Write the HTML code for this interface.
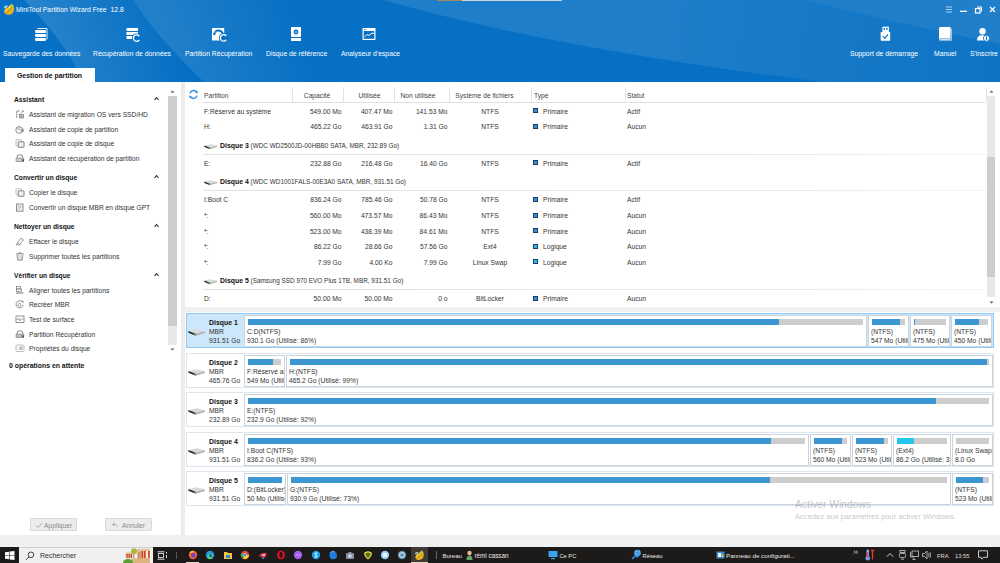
<!DOCTYPE html>
<html><head><meta charset="utf-8">
<style>
*{margin:0;padding:0;box-sizing:border-box}
html,body{width:1000px;height:563px;overflow:hidden;background:#f0f0f0;font-family:"Liberation Sans",sans-serif;font-size:6.7px;color:#222}
.a{position:absolute;white-space:nowrap}
.t{position:absolute;white-space:nowrap;line-height:10px;height:10px}
#hdr{position:absolute;left:0;top:0;width:1000px;height:83px;background:#0670c4;overflow:hidden}
.tl{color:#fff;font-size:6.8px}
.lbl{color:#fff;font-size:6.8px}
#left{position:absolute;left:0;top:82px;width:181px;height:453px;background:#fff}
#sep{position:absolute;left:181px;top:82px;width:4px;height:453px;background:#ececec}
#main{position:absolute;left:185px;top:82px;width:815px;height:453px;background:#fff}
.sh{font-weight:bold;color:#111}
.it{color:#333}
.hd{color:#444}
.v{color:#333}
.card{position:absolute;left:186px;width:808px;height:34px;border:1px solid #dfe5ec;background:#fff}
.card.sel{background:#cce6fa;border-color:#90caf9}
.pb{position:absolute;top:1px;height:31px;border:1px solid #cad4e0;background:#fff;overflow:hidden}
.bar{position:absolute;left:3px;top:3px;height:6px;background:#cdcdcd}
.bar i{position:absolute;left:0;top:0;height:6px;background:#3c96d2}
.pt{position:absolute;left:2px;white-space:nowrap;line-height:9px;color:#333}
.dl{position:absolute;left:22px;white-space:nowrap;line-height:9px;color:#333}
</style></head><body>

<div id="hdr">
<svg width="1000" height="83" style="position:absolute;left:0;top:0">
<defs>
<linearGradient id="g1" gradientUnits="userSpaceOnUse" x1="50" y1="45" x2="160" y2="5"><stop offset="0" stop-color="#fff" stop-opacity="0.13"/><stop offset="1" stop-color="#fff" stop-opacity="0"/></linearGradient>
<linearGradient id="g2" gradientUnits="userSpaceOnUse" x1="168" y1="45" x2="300" y2="5"><stop offset="0" stop-color="#fff" stop-opacity="0.11"/><stop offset="1" stop-color="#fff" stop-opacity="0"/></linearGradient>
<linearGradient id="g3" gradientUnits="userSpaceOnUse" x1="650" y1="15" x2="1000" y2="80"><stop offset="0" stop-color="#fff" stop-opacity="0.10"/><stop offset="1" stop-color="#fff" stop-opacity="0.03"/></linearGradient>
<linearGradient id="g4" gradientUnits="userSpaceOnUse" x1="0" y1="82" x2="0" y2="0"><stop offset="0" stop-color="#fff" stop-opacity="0.05"/><stop offset="1" stop-color="#fff" stop-opacity="0"/></linearGradient>
</defs>
<path d="M24,0 L134,0 Q150,30 205,83 L85,83 Q60,35 24,0 Z" fill="url(#g1)"/>
<path d="M134,0 L383,0 L383,83 L205,83 Q150,30 134,0 Z" fill="url(#g2)"/>
<path d="M383,0 L806,0 Q900,24 1000,44 L1000,83 L831,83 Q560,50 383,0 Z" fill="url(#g3)"/>
<path d="M806,0 L1000,0 L1000,44 Q900,24 806,0Z" fill="#fff" fill-opacity="0.11"/>
</svg>

<!-- logo -->
<svg class="a" style="left:2px;top:2px" width="13" height="14" viewBox="0 0 13 14">
<defs><linearGradient id="lg" x1="0" y1="0" x2="1" y2="1"><stop offset="0" stop-color="#f8e030"/><stop offset="1" stop-color="#e89a10"/></linearGradient></defs>
<ellipse cx="3.8" cy="4.8" rx="2.2" ry="1.1" transform="rotate(-25 3.8 4.8)" fill="#9fd0f0"/>
<path d="M2.2,9.5 Q2.5,6.2 6,5.2 L9.5,1.8 Q12.6,3.5 12,8 Q11.5,12.5 6.5,12.8 Q2.8,12.8 2.2,9.5Z" fill="url(#lg)"/>
<path d="M9,3.5 L11,5.5 L9.5,7.5Z" fill="#6cc04a" opacity="0.8"/>
<path d="M6.5,4.5 L8,3.8 L8,6Z" fill="#e8f0a0"/>
<path d="M2,13.5 L9,6.5" stroke="#555" stroke-width="0.6"/>
</svg>
<div class="t tl" style="left:16px;top:5px">MiniTool Partition Wizard Free&nbsp; 12.8</div>
<!-- window controls -->
<svg class="a" style="left:944px;top:4px" width="56" height="12" viewBox="0 0 56 12">
<path d="M2,3h6M2,5.5h6M2,8h6" stroke="#cfe3f5" stroke-width="0.8"/>
<path d="M16,7.3h7" stroke="#fff" stroke-width="1.3"/>
<rect x="31.5" y="4.5" width="4.5" height="4.5" fill="none" stroke="#fff" stroke-width="1.2"/>
<path d="M33,3h4.5v4.5" fill="none" stroke="#fff" stroke-width="1"/>
<path d="M46,3l5,5M51,3l-5,5" stroke="#fff" stroke-width="1.2"/>
</svg>
<!-- toolbar icons -->
<svg class="a" style="left:33px;top:27px" width="16" height="16" viewBox="0 0 16 16">
<path d="M4.5,1.5h9.5v11" fill="none" stroke="#fff" stroke-width="0.9"/>
<rect x="2" y="3" width="11" height="3" rx="1.3" fill="#fff"/>
<rect x="2" y="7" width="11" height="3" rx="1.3" fill="#fff"/>
<rect x="2" y="11" width="11" height="3" rx="1.3" fill="#fff"/>
</svg>
<svg class="a" style="left:124px;top:26px" width="18" height="18" viewBox="0 0 18 18">
<rect x="2.5" y="2" width="11.5" height="3" rx="0.5" fill="#fff"/>
<rect x="2.5" y="6" width="11.5" height="3" rx="0.5" fill="#fff"/>
<rect x="2.5" y="10" width="11.5" height="3" rx="0.5" fill="#fff"/>
<circle cx="12.5" cy="12" r="4.6" fill="#0670c4"/>
<path d="M14.9,9.9 A3.2,3.2 0 1 0 15.3,13.8" fill="none" stroke="#fff" stroke-width="1.3"/>
<path d="M13.2,8.6 L15.6,8.9 L15,11Z" fill="#fff"/>
</svg>
<svg class="a" style="left:210px;top:26px" width="18" height="18" viewBox="0 0 18 18">
<rect x="2" y="2" width="12.2" height="12.5" rx="0.6" fill="#fff"/>
<path d="M4,9 Q5,4.5 8.5,4.5 Q12,4.5 13,8.5" fill="none" stroke="#0670c4" stroke-width="2.2"/>
<path d="M4.8,6.8 Q5.5,5.3 6.8,5.8" fill="none" stroke="#fff" stroke-width="0.6"/>
<circle cx="13.5" cy="11.8" r="4.6" fill="#0670c4"/>
<path d="M15.9,9.7 A3.2,3.2 0 1 0 16.3,13.6" fill="none" stroke="#fff" stroke-width="1.3"/>
<path d="M14.2,8.4 L16.6,8.7 L16,10.8Z" fill="#fff"/>
</svg>
<svg class="a" style="left:289px;top:26px" width="14" height="17" viewBox="0 0 14 17">
<rect x="2" y="1" width="10" height="10" rx="0.8" fill="#fff"/>
<circle cx="7" cy="6" r="2.4" fill="#0670c4"/><circle cx="7" cy="6" r="0.8" fill="#fff"/>
<rect x="2" y="12" width="10" height="3" rx="0.5" fill="#fff"/>
</svg>
<svg class="a" style="left:361px;top:27px" width="16" height="15" viewBox="0 0 16 15">
<rect x="1.5" y="1" width="13" height="12" rx="0.5" fill="#fff"/>
<rect x="2.7" y="4" width="10.6" height="7.8" fill="#0670c4"/>
<circle cx="3.5" cy="2.4" r="0.5" fill="#0670c4"/><circle cx="5" cy="2.4" r="0.5" fill="#0670c4"/>
<path d="M3.5,10 L6,7.5 L8,8.5 L11,6 L13,6.5" fill="none" stroke="#fff" stroke-width="1"/>
</svg>
<svg class="a" style="left:877px;top:25px" width="15" height="17" viewBox="0 0 15 17">
<rect x="5.4" y="1.7" width="6.5" height="5.5" fill="#fff"/>
<rect x="6.6" y="3" width="1.5" height="1.8" fill="#0670c4"/><rect x="9.2" y="3" width="1.5" height="1.8" fill="#0670c4"/>
<rect x="3.7" y="7" width="9.5" height="8.7" rx="0.6" fill="#fff"/>
<path d="M5.8,11.2 L7.8,13.3 L11,9.3" fill="none" stroke="#0670c4" stroke-width="1.2"/>
</svg>
<svg class="a" style="left:937px;top:26px" width="16" height="16" viewBox="0 0 16 16">
<path d="M2,2.5 Q2,1 3.5,1 L13.5,1 L13.5,12.5 L3.5,12.5 Q2,12.5 2,14 Z" fill="#fff"/>
<path d="M2,14 Q2,12.5 3.5,12.5 L13.5,12.5 L13.5,14.8 L3.5,14.8 Q2,14.8 2,14Z" fill="#a9cdee"/>
<path d="M3.5,13.6 L13,13.6" stroke="#fff" stroke-width="0.5"/>
<path d="M14.2,2.5 L14.2,14.8" stroke="#fff" stroke-width="0.8"/>
</svg>
<svg class="a" style="left:975px;top:26px" width="16" height="17" viewBox="0 0 16 17">
<circle cx="7.5" cy="5.3" r="3.2" fill="#fff"/>
<path d="M2,14.5 Q2,10 6,9.3 L8.5,9.3 Q10.5,9.6 11.5,10.8 L10,14.5 Z" fill="#fff"/>
<circle cx="11.5" cy="12.3" r="3.1" fill="#fff" stroke="#0670c4" stroke-width="0.9"/>
<path d="M11.5,10.5v3.6" stroke="#0670c4" stroke-width="1.1"/>
</svg>
<div class="t lbl" style="left:3px;top:48.5px">Sauvegarde des données</div>
<div class="t lbl" style="left:93px;top:48.5px">Récupération de données</div>
<div class="t lbl" style="left:185px;top:48.5px">Partition Récupération</div>
<div class="t lbl" style="left:266px;top:48.5px">Disque de référence</div>
<div class="t lbl" style="left:341px;top:48.5px">Analyseur d'espace</div>
<div class="t lbl" style="left:850px;top:48.5px">Support de démarrage</div>
<div class="t lbl" style="left:934px;top:48.5px">Manuel</div>
<div class="t lbl" style="left:970px;top:48.5px">S'inscrire</div>
<!-- tab -->
<div class="a" style="left:5px;top:68px;width:90px;height:15px;background:#fff"></div>
<div class="t" style="left:17px;top:71px;font-weight:bold;color:#111;font-size:6.9px">Gestion de partition</div>
</div>

<div id="left"></div>
<div class="t sh" style="left:14px;top:95.05px">Assistant</div><svg class="a" style="left:153px;top:96.05px" width="7" height="5" viewBox="0 0 7 5"><path d="M1.5,3.8 L3.5,1.6 L5.5,3.8" fill="none" stroke="#333" stroke-width="1.1"/></svg>
<svg class="a" style="left:15px;top:110.0px" width="10" height="10" viewBox="0 0 10 10"><path d="M1.8,8 V1 H4.8" fill="none" stroke="#777" stroke-width="0.8"/><path d="M5.5,3.6 L7.8,1.2" stroke="#777" stroke-width="0.7"/><path d="M6.5,0.6 L8.6,0.5 L8.5,2.5Z" fill="#777"/><rect x="4.6" y="4.6" width="3.8" height="3.4" fill="#ddd" stroke="#777" stroke-width="0.7"/><path d="M6.5,4.6v3.4M4.6,6.3h3.8" stroke="#777" stroke-width="0.5"/></svg><div class="t it" style="left:29px;top:110.0px">Assistant de migration OS vers SSD/HD</div>
<svg class="a" style="left:15px;top:124.95px" width="10" height="10" viewBox="0 0 10 10"><circle cx="4.2" cy="5" r="3.4" fill="none" stroke="#777" stroke-width="0.8"/><path d="M1.5,3 L4.2,5 L4.2,1.6" fill="none" stroke="#777" stroke-width="0.6"/><rect x="5.6" y="3.8" width="3.2" height="3" fill="#999"/></svg><div class="t it" style="left:29px;top:124.95px">Assistant de copie de partition</div>
<svg class="a" style="left:15px;top:139.4px" width="10" height="10" viewBox="0 0 10 10"><rect x="1" y="0.8" width="5.5" height="6" rx="0.6" fill="none" stroke="#b5b5b5" stroke-width="0.9"/><rect x="3.2" y="2.8" width="5.8" height="5.5" rx="0.4" fill="#eee" stroke="#777" stroke-width="0.9"/></svg><div class="t it" style="left:29px;top:139.4px">Assistant de copie de disque</div>
<svg class="a" style="left:15px;top:154.35px" width="10" height="10" viewBox="0 0 10 10"><path d="M1.8,4 L2.8,1 H7 L8,4" fill="none" stroke="#777" stroke-width="0.8"/><rect x="1" y="4" width="7.5" height="3.5" rx="0.5" fill="#ccc" stroke="#777" stroke-width="0.6"/><path d="M6.5,5.5 L9.5,5.5 L8,8Z" fill="#444"/></svg><div class="t it" style="left:29px;top:154.35px">Assistant de récupération de partition</div>
<div class="t sh" style="left:14px;top:172.79px">Convertir un disque</div><svg class="a" style="left:153px;top:173.79px" width="7" height="5" viewBox="0 0 7 5"><path d="M1.5,3.8 L3.5,1.6 L5.5,3.8" fill="none" stroke="#333" stroke-width="1.1"/></svg>
<svg class="a" style="left:15px;top:188.23px" width="10" height="10" viewBox="0 0 10 10"><rect x="1" y="0.8" width="5.5" height="6" rx="0.6" fill="none" stroke="#b5b5b5" stroke-width="0.9"/><rect x="3.2" y="2.8" width="5.8" height="5.5" rx="0.4" fill="#eee" stroke="#777" stroke-width="0.9"/></svg><div class="t it" style="left:29px;top:188.23px">Copier le disque</div>
<svg class="a" style="left:15px;top:203.18px" width="10" height="10" viewBox="0 0 10 10"><rect x="1.5" y="1" width="6.5" height="7.2" fill="#eee" stroke="#777" stroke-width="0.8"/><path d="M3,6.5 L6.5,3 M3,4 L4.5,3" stroke="#777" stroke-width="0.6"/></svg><div class="t it" style="left:29px;top:203.18px">Convertir un disque MBR en disque GPT</div>
<div class="t sh" style="left:14px;top:222.12px">Nettoyer un disque</div><svg class="a" style="left:153px;top:223.12px" width="7" height="5" viewBox="0 0 7 5"><path d="M1.5,3.8 L3.5,1.6 L5.5,3.8" fill="none" stroke="#333" stroke-width="1.1"/></svg>
<svg class="a" style="left:15px;top:237.07px" width="10" height="10" viewBox="0 0 10 10"><path d="M1.2,7.8 L5.8,1.2 L8.5,2.8 L4.5,7.8 Z" fill="none" stroke="#777" stroke-width="0.75"/><path d="M2.5,6 L5.5,7.5" stroke="#777" stroke-width="0.5"/></svg><div class="t it" style="left:29px;top:237.07px">Effacer le disque</div>
<svg class="a" style="left:15px;top:251.52px" width="10" height="10" viewBox="0 0 10 10"><path d="M1,1.8 H8.8 M3.6,1.8 V0.8 H6.2 V1.8" fill="none" stroke="#777" stroke-width="0.75"/><path d="M2,2.5 L2.6,8.2 H7.2 L7.8,2.5" fill="#ddd" stroke="#777" stroke-width="0.7"/></svg><div class="t it" style="left:29px;top:251.52px">Supprimer toutes les partitions</div>
<div class="t sh" style="left:14px;top:270.95px">Vérifier un disque</div><svg class="a" style="left:153px;top:271.95px" width="7" height="5" viewBox="0 0 7 5"><path d="M1.5,3.8 L3.5,1.6 L5.5,3.8" fill="none" stroke="#333" stroke-width="1.1"/></svg>
<svg class="a" style="left:15px;top:285.9px" width="10" height="10" viewBox="0 0 10 10"><rect x="1.5" y="0.6" width="4" height="2.4" fill="none" stroke="#777" stroke-width="0.7"/><rect x="1.5" y="3" width="5" height="2.4" fill="none" stroke="#777" stroke-width="0.7"/><path d="M1,7 H8.5" stroke="#777" stroke-width="1"/></svg><div class="t it" style="left:29px;top:285.9px">Aligner toutes les partitions</div>
<svg class="a" style="left:15px;top:300.35px" width="10" height="10" viewBox="0 0 10 10"><path d="M7.6,2.2 A3.6,3.6 0 1 0 8.2,5" fill="none" stroke="#777" stroke-width="0.8"/><circle cx="4.6" cy="4.8" r="1.4" fill="none" stroke="#777" stroke-width="0.7"/><path d="M6.5,0.8 L8.6,1 L8.2,3Z" fill="#777"/></svg><div class="t it" style="left:29px;top:300.35px">Recréer MBR</div>
<svg class="a" style="left:15px;top:314.8px" width="10" height="10" viewBox="0 0 10 10"><rect x="1" y="1" width="8" height="6.5" fill="none" stroke="#777" stroke-width="0.8"/><path d="M1.5,4.5 H3 L4,3 L5,6 L6,4 H8.5" fill="none" stroke="#777" stroke-width="0.6"/></svg><div class="t it" style="left:29px;top:314.8px">Test de surface</div>
<svg class="a" style="left:15px;top:329.75px" width="10" height="10" viewBox="0 0 10 10"><path d="M1.8,4 L2.8,1 H7 L8,4" fill="none" stroke="#777" stroke-width="0.8"/><rect x="1" y="4" width="7.5" height="3.5" rx="0.5" fill="#bbb" stroke="#777" stroke-width="0.6"/><path d="M6.5,5.5 L9.5,5.5 L8,8Z" fill="#444"/></svg><div class="t it" style="left:29px;top:329.75px">Partition Récupération</div>
<svg class="a" style="left:15px;top:344.2px" width="10" height="10" viewBox="0 0 10 10"><rect x="1" y="1" width="8" height="6.5" rx="1" fill="none" stroke="#b5b5b5" stroke-width="0.9"/><rect x="4.2" y="2.5" width="3.5" height="3.5" fill="#bbb"/><path d="M2.7,2.5v3.5" stroke="#ccc" stroke-width="0.6"/></svg><div class="t it" style="left:29px;top:344.2px">Propriétés du disque</div>
<div class="t sh" style="left:9px;top:360.5px;font-size:6.9px">0 opérations en attente</div>
<div class="a" style="left:168px;top:96px;width:9px;height:249px;background:#e8e8e8"></div>
<div class="a" style="left:168px;top:96px;width:9px;height:230px;background:#cdcdcd"></div>
<svg class="a" style="left:169px;top:89px" width="7" height="5" viewBox="0 0 7 5"><path d="M1.5,3.5 L3.5,1.5 L5.5,3.5Z" fill="#555"/></svg>
<svg class="a" style="left:169px;top:347px" width="7" height="5" viewBox="0 0 7 5"><path d="M1.5,1.5 L3.5,3.5 L5.5,1.5Z" fill="#555"/></svg>
<div class="a" style="left:30px;top:518px;width:47px;height:13px;background:#ececec;border:1px solid #d9d9d9;border-radius:1px"></div>
<svg class="a" style="left:35px;top:522px" width="8" height="7" viewBox="0 0 8 7"><path d="M1,3.5 L3,5.5 L7,1.5" fill="none" stroke="#999" stroke-width="0.9"/></svg>
<div class="t" style="left:44px;top:520.5px;color:#8a8a8a">Appliquer</div>
<div class="a" style="left:105px;top:518px;width:47px;height:13px;background:#ececec;border:1px solid #d9d9d9;border-radius:1px"></div>
<svg class="a" style="left:111px;top:522px" width="8" height="7" viewBox="0 0 8 7"><path d="M2,2.5 Q5,1 6.5,4.5 M1.5,2.5 L3.5,0.8 M1.5,2.5 L3.3,4" fill="none" stroke="#999" stroke-width="0.8"/></svg>
<div class="t" style="left:122px;top:520.5px;color:#8a8a8a">Annuler</div>
<div id="sep"></div>
<div id="main"></div>
<svg class="a" style="left:188px;top:89px" width="11" height="11" viewBox="0 0 11 11"><path d="M2,4.5 A3.6,3.6 0 0 1 8.8,3.6" fill="none" stroke="#2a8ee0" stroke-width="1.3"/><path d="M9,6.5 A3.6,3.6 0 0 1 2.2,7.4" fill="none" stroke="#2a8ee0" stroke-width="1.3"/><path d="M7.2,3.8 L9.6,4.4 L9.8,1.8Z" fill="#2a8ee0"/><path d="M3.8,7.2 L1.4,6.6 L1.2,9.2Z" fill="#2a8ee0"/></svg>
<div class="t hd" style="left:204px;top:91px">Partition</div>
<div class="t hd" style="left:277px;top:91px;width:80px;text-align:center">Capacité</div>
<div class="t hd" style="left:329.5px;top:91px;width:80px;text-align:center">Utilisée</div>
<div class="t hd" style="left:378px;top:91px;width:80px;text-align:center">Non utilisée</div>
<div class="t hd" style="left:444.5px;top:91px;width:80px;text-align:center">Système de fichiers</div>
<div class="t hd" style="left:534px;top:91px">Type</div>
<div class="t hd" style="left:627px;top:91px">Statut</div>
<div class="a" style="left:292px;top:87px;width:1px;height:15px;background:#e4e4e4"></div>
<div class="a" style="left:343px;top:87px;width:1px;height:15px;background:#e4e4e4"></div>
<div class="a" style="left:394px;top:87px;width:1px;height:15px;background:#e4e4e4"></div>
<div class="a" style="left:449px;top:87px;width:1px;height:15px;background:#e4e4e4"></div>
<div class="a" style="left:531px;top:87px;width:1px;height:15px;background:#e4e4e4"></div>
<div class="a" style="left:625px;top:87px;width:1px;height:15px;background:#e4e4e4"></div>
<div class="a" style="left:986px;top:87px;width:1px;height:15px;background:#e4e4e4"></div>
<div class="a" style="left:203px;top:102px;width:783px;height:1px;background:#e0e0e0"></div>
<div class="t v" style="left:204px;top:106.5px">F:Réservé au système</div>
<div class="t v" style="left:281.5px;top:106.5px;width:60px;text-align:right">549.00 Mo</div>
<div class="t v" style="left:332.5px;top:106.5px;width:60px;text-align:right">407.47 Mo</div>
<div class="t v" style="left:387.5px;top:106.5px;width:60px;text-align:right">141.53 Mo</div>
<div class="t v" style="left:450px;top:106.5px;width:80px;text-align:center">NTFS</div>
<div class="a" style="left:533px;top:108px;width:5px;height:5px;background:#3a8fd4;border:1px solid #1a3f66"></div>
<div class="t v" style="left:543px;top:106.5px">Primaire</div>
<div class="t v" style="left:627px;top:106.5px">Actif</div>
<div class="t v" style="left:204px;top:122px">H:</div>
<div class="t v" style="left:281.5px;top:122px;width:60px;text-align:right">465.22 Go</div>
<div class="t v" style="left:332.5px;top:122px;width:60px;text-align:right">463.91 Go</div>
<div class="t v" style="left:387.5px;top:122px;width:60px;text-align:right">1.31 Go</div>
<div class="t v" style="left:450px;top:122px;width:80px;text-align:center">NTFS</div>
<div class="a" style="left:533px;top:123.5px;width:5px;height:5px;background:#3a8fd4;border:1px solid #1a3f66"></div>
<div class="t v" style="left:543px;top:122px">Primaire</div>
<div class="t v" style="left:627px;top:122px">Aucun</div>
<svg class="a" style="left:203.5px;top:143.5px" width="13.3" height="5.5" viewBox="0 0 17 7"><path d="M0.4,1.9 L8.7,0.3 L16.8,2.3 L7.7,4.7 Z" fill="#d9d9d9"/><path d="M0.4,1.9 L7.7,4.7 L7.7,6.7 L0.4,3.8 Z" fill="#2a2a2a"/><path d="M7.7,4.7 L16.8,2.3 L16.8,3.9 L7.7,6.7 Z" fill="#b0b0b0"/><path d="M5.6,4.6 L7.6,5.3 L7.6,6.3 L5.6,5.6Z" fill="#3bb54a"/></svg>
<div class="t" style="left:220px;top:140.5px"><b style="color:#111;font-size:6.9px">Disque 3</b> <span style="color:#333;font-size:6.4px">(WDC WD2500JD-00HBB0 SATA, MBR, 232.89 Go)</span></div>
<div class="a" style="left:203px;top:153.5px;width:783px;height:1px;background:linear-gradient(90deg,#e2e2e2,#e8e8e8 70%,#f6f6f6)"></div>
<div class="t v" style="left:204px;top:158.5px">E:</div>
<div class="t v" style="left:281.5px;top:158.5px;width:60px;text-align:right">232.88 Go</div>
<div class="t v" style="left:332.5px;top:158.5px;width:60px;text-align:right">216.48 Go</div>
<div class="t v" style="left:387.5px;top:158.5px;width:60px;text-align:right">16.40 Go</div>
<div class="t v" style="left:450px;top:158.5px;width:80px;text-align:center">NTFS</div>
<div class="a" style="left:533px;top:160px;width:5px;height:5px;background:#3a8fd4;border:1px solid #1a3f66"></div>
<div class="t v" style="left:543px;top:158.5px">Primaire</div>
<div class="t v" style="left:627px;top:158.5px">Actif</div>
<svg class="a" style="left:203.5px;top:180px" width="13.3" height="5.5" viewBox="0 0 17 7"><path d="M0.4,1.9 L8.7,0.3 L16.8,2.3 L7.7,4.7 Z" fill="#d9d9d9"/><path d="M0.4,1.9 L7.7,4.7 L7.7,6.7 L0.4,3.8 Z" fill="#2a2a2a"/><path d="M7.7,4.7 L16.8,2.3 L16.8,3.9 L7.7,6.7 Z" fill="#b0b0b0"/><path d="M5.6,4.6 L7.6,5.3 L7.6,6.3 L5.6,5.6Z" fill="#3bb54a"/></svg>
<div class="t" style="left:220px;top:177px"><b style="color:#111;font-size:6.9px">Disque 4</b> <span style="color:#333;font-size:6.4px">(WDC WD1001FALS-00E3A0 SATA, MBR, 931.51 Go)</span></div>
<div class="a" style="left:203px;top:190.0px;width:783px;height:1px;background:linear-gradient(90deg,#e2e2e2,#e8e8e8 70%,#f6f6f6)"></div>
<div class="t v" style="left:204px;top:195px">I:Boot C</div>
<div class="t v" style="left:281.5px;top:195px;width:60px;text-align:right">836.24 Go</div>
<div class="t v" style="left:332.5px;top:195px;width:60px;text-align:right">785.46 Go</div>
<div class="t v" style="left:387.5px;top:195px;width:60px;text-align:right">50.78 Go</div>
<div class="t v" style="left:450px;top:195px;width:80px;text-align:center">NTFS</div>
<div class="a" style="left:533px;top:196.5px;width:5px;height:5px;background:#3a8fd4;border:1px solid #1a3f66"></div>
<div class="t v" style="left:543px;top:195px">Primaire</div>
<div class="t v" style="left:627px;top:195px">Actif</div>
<div class="t v" style="left:204px;top:211px">*:</div>
<div class="t v" style="left:281.5px;top:211px;width:60px;text-align:right">560.00 Mo</div>
<div class="t v" style="left:332.5px;top:211px;width:60px;text-align:right">473.57 Mo</div>
<div class="t v" style="left:387.5px;top:211px;width:60px;text-align:right">86.43 Mo</div>
<div class="t v" style="left:450px;top:211px;width:80px;text-align:center">NTFS</div>
<div class="a" style="left:533px;top:212.5px;width:5px;height:5px;background:#3a8fd4;border:1px solid #1a3f66"></div>
<div class="t v" style="left:543px;top:211px">Primaire</div>
<div class="t v" style="left:627px;top:211px">Aucun</div>
<div class="t v" style="left:204px;top:226.5px">*:</div>
<div class="t v" style="left:281.5px;top:226.5px;width:60px;text-align:right">523.00 Mo</div>
<div class="t v" style="left:332.5px;top:226.5px;width:60px;text-align:right">438.39 Mo</div>
<div class="t v" style="left:387.5px;top:226.5px;width:60px;text-align:right">84.61 Mo</div>
<div class="t v" style="left:450px;top:226.5px;width:80px;text-align:center">NTFS</div>
<div class="a" style="left:533px;top:228px;width:5px;height:5px;background:#3a8fd4;border:1px solid #1a3f66"></div>
<div class="t v" style="left:543px;top:226.5px">Primaire</div>
<div class="t v" style="left:627px;top:226.5px">Aucun</div>
<div class="t v" style="left:204px;top:242px">*:</div>
<div class="t v" style="left:281.5px;top:242px;width:60px;text-align:right">86.22 Go</div>
<div class="t v" style="left:332.5px;top:242px;width:60px;text-align:right">28.66 Go</div>
<div class="t v" style="left:387.5px;top:242px;width:60px;text-align:right">57.56 Go</div>
<div class="t v" style="left:450px;top:242px;width:80px;text-align:center">Ext4</div>
<div class="a" style="left:533px;top:243.5px;width:5px;height:5px;background:#26c0ea;border:1px solid #1a3f66"></div>
<div class="t v" style="left:543px;top:242px">Logique</div>
<div class="t v" style="left:627px;top:242px">Aucun</div>
<div class="t v" style="left:204px;top:257.5px">*:</div>
<div class="t v" style="left:281.5px;top:257.5px;width:60px;text-align:right">7.99 Go</div>
<div class="t v" style="left:332.5px;top:257.5px;width:60px;text-align:right">4.00 Ko</div>
<div class="t v" style="left:387.5px;top:257.5px;width:60px;text-align:right">7.99 Go</div>
<div class="t v" style="left:450px;top:257.5px;width:80px;text-align:center">Linux Swap</div>
<div class="a" style="left:533px;top:259px;width:5px;height:5px;background:#26c0ea;border:1px solid #1a3f66"></div>
<div class="t v" style="left:543px;top:257.5px">Logique</div>
<div class="t v" style="left:627px;top:257.5px">Aucun</div>
<svg class="a" style="left:203.5px;top:279px" width="13.3" height="5.5" viewBox="0 0 17 7"><path d="M0.4,1.9 L8.7,0.3 L16.8,2.3 L7.7,4.7 Z" fill="#d9d9d9"/><path d="M0.4,1.9 L7.7,4.7 L7.7,6.7 L0.4,3.8 Z" fill="#2a2a2a"/><path d="M7.7,4.7 L16.8,2.3 L16.8,3.9 L7.7,6.7 Z" fill="#b0b0b0"/><path d="M5.6,4.6 L7.6,5.3 L7.6,6.3 L5.6,5.6Z" fill="#3bb54a"/></svg>
<div class="t" style="left:220px;top:276px"><b style="color:#111;font-size:6.9px">Disque 5</b> <span style="color:#333;font-size:6.4px">(Samsung SSD 970 EVO Plus 1TB, MBR, 931.51 Go)</span></div>
<div class="a" style="left:203px;top:289.0px;width:783px;height:1px;background:linear-gradient(90deg,#e2e2e2,#e8e8e8 70%,#f6f6f6)"></div>
<div class="t v" style="left:204px;top:294px">D:</div>
<div class="t v" style="left:281.5px;top:294px;width:60px;text-align:right">50.00 Mo</div>
<div class="t v" style="left:332.5px;top:294px;width:60px;text-align:right">50.00 Mo</div>
<div class="t v" style="left:387.5px;top:294px;width:60px;text-align:right">0 o</div>
<div class="t v" style="left:450px;top:294px;width:80px;text-align:center">BitLocker</div>
<div class="a" style="left:533px;top:295.5px;width:5px;height:5px;background:#3a8fd4;border:1px solid #1a3f66"></div>
<div class="t v" style="left:543px;top:294px">Primaire</div>
<div class="t v" style="left:627px;top:294px">Aucun</div>
<div class="a" style="left:987px;top:96px;width:8px;height:201px;background:#e8e8e8"></div>
<div class="a" style="left:987px;top:157px;width:8px;height:120px;background:#cdcdcd"></div>
<svg class="a" style="left:988px;top:89px" width="7" height="5" viewBox="0 0 7 5"><path d="M1.5,3.5 L3.5,1.5 L5.5,3.5Z" fill="#555"/></svg>
<svg class="a" style="left:988px;top:300px" width="7" height="5" viewBox="0 0 7 5"><path d="M1.5,1.5 L3.5,3.5 L5.5,1.5Z" fill="#555"/></svg>
<div class="a" style="left:185px;top:307px;width:815px;height:5px;background:#efefef"></div>

<div class="card sel" style="top:313px;height:35px">
<svg class="a" style="left:1px;top:15px" width="17" height="7" viewBox="0 0 17 7"><path d="M0.4,1.9 L8.7,0.3 L16.8,2.3 L7.7,4.7 Z" fill="#d9d9d9"/><path d="M0.4,1.9 L7.7,4.7 L7.7,6.7 L0.4,3.8 Z" fill="#2a2a2a"/><path d="M7.7,4.7 L16.8,2.3 L16.8,3.9 L7.7,6.7 Z" fill="#b0b0b0"/><path d="M5.6,4.6 L7.6,5.3 L7.6,6.3 L5.6,5.6Z" fill="#3bb54a"/></svg>
<div class="dl" style="top:3.5px;font-weight:bold;color:#111;font-size:6.9px">Disque 1</div>
<div class="dl" style="top:13px">MBR</div>
<div class="dl" style="top:22px">931.51 Go</div>
<div class="pb" style="left:57px;width:623px;height:32px"><div class="bar" style="width:615px"><i style="width:531px;background:#3c96d2"></i></div><div class="pt" style="top:11px">C:D(NTFS)</div><div class="pt" style="top:20px">930.1 Go (Utilisé: 86%)</div></div>
<div class="pb" style="left:681px;width:41px;height:32px"><div class="bar" style="width:33px"><i style="width:28px;background:#3c96d2"></i></div><div class="pt" style="top:11px">(NTFS)</div><div class="pt" style="top:20px">547 Mo (Utilisé: 82%)</div></div>
<div class="pb" style="left:723px;width:40px;height:32px"><div class="bar" style="width:32px"><i style="width:1px;background:#3c96d2"></i></div><div class="pt" style="top:11px">(NTFS)</div><div class="pt" style="top:20px">475 Mo (Utilisé: 3%)</div></div>
<div class="pb" style="left:764px;width:41px;height:32px"><div class="bar" style="width:33px"><i style="width:24px;background:#3c96d2"></i></div><div class="pt" style="top:11px">(NTFS)</div><div class="pt" style="top:20px">450 Mo (Utilisé: 74%)</div></div>
</div>
<div class="card" style="top:353px;height:35px">
<svg class="a" style="left:1px;top:15px" width="17" height="7" viewBox="0 0 17 7"><path d="M0.4,1.9 L8.7,0.3 L16.8,2.3 L7.7,4.7 Z" fill="#d9d9d9"/><path d="M0.4,1.9 L7.7,4.7 L7.7,6.7 L0.4,3.8 Z" fill="#2a2a2a"/><path d="M7.7,4.7 L16.8,2.3 L16.8,3.9 L7.7,6.7 Z" fill="#b0b0b0"/><path d="M5.6,4.6 L7.6,5.3 L7.6,6.3 L5.6,5.6Z" fill="#3bb54a"/></svg>
<div class="dl" style="top:3.5px;font-weight:bold;color:#111;font-size:6.9px">Disque 2</div>
<div class="dl" style="top:13px">MBR</div>
<div class="dl" style="top:22px">465.76 Go</div>
<div class="pb" style="left:57px;width:41px;height:32px"><div class="bar" style="width:33px"><i style="width:25px;background:#3c96d2"></i></div><div class="pt" style="top:11px">F:Réservé au système(NTFS)</div><div class="pt" style="top:20px">549 Mo (Utilisé: 74%)</div></div>
<div class="pb" style="left:99px;width:707px;height:32px"><div class="bar" style="width:699px"><i style="width:697px;background:#3c96d2"></i></div><div class="pt" style="top:11px">H:(NTFS)</div><div class="pt" style="top:20px">465.2 Go (Utilisé: 99%)</div></div>
</div>
<div class="card" style="top:392px;height:35px">
<svg class="a" style="left:1px;top:15px" width="17" height="7" viewBox="0 0 17 7"><path d="M0.4,1.9 L8.7,0.3 L16.8,2.3 L7.7,4.7 Z" fill="#d9d9d9"/><path d="M0.4,1.9 L7.7,4.7 L7.7,6.7 L0.4,3.8 Z" fill="#2a2a2a"/><path d="M7.7,4.7 L16.8,2.3 L16.8,3.9 L7.7,6.7 Z" fill="#b0b0b0"/><path d="M5.6,4.6 L7.6,5.3 L7.6,6.3 L5.6,5.6Z" fill="#3bb54a"/></svg>
<div class="dl" style="top:3.5px;font-weight:bold;color:#111;font-size:6.9px">Disque 3</div>
<div class="dl" style="top:13px">MBR</div>
<div class="dl" style="top:22px">232.89 Go</div>
<div class="pb" style="left:57px;width:749px;height:32px"><div class="bar" style="width:741px"><i style="width:688px;background:#3c96d2"></i></div><div class="pt" style="top:11px">E:(NTFS)</div><div class="pt" style="top:20px">232.9 Go (Utilisé: 92%)</div></div>
</div>
<div class="card" style="top:432px;height:35px">
<svg class="a" style="left:1px;top:15px" width="17" height="7" viewBox="0 0 17 7"><path d="M0.4,1.9 L8.7,0.3 L16.8,2.3 L7.7,4.7 Z" fill="#d9d9d9"/><path d="M0.4,1.9 L7.7,4.7 L7.7,6.7 L0.4,3.8 Z" fill="#2a2a2a"/><path d="M7.7,4.7 L16.8,2.3 L16.8,3.9 L7.7,6.7 Z" fill="#b0b0b0"/><path d="M5.6,4.6 L7.6,5.3 L7.6,6.3 L5.6,5.6Z" fill="#3bb54a"/></svg>
<div class="dl" style="top:3.5px;font-weight:bold;color:#111;font-size:6.9px">Disque 4</div>
<div class="dl" style="top:13px">MBR</div>
<div class="dl" style="top:22px">931.51 Go</div>
<div class="pb" style="left:57px;width:565px;height:32px"><div class="bar" style="width:557px"><i style="width:523px;background:#3c96d2"></i></div><div class="pt" style="top:11px">I:Boot C(NTFS)</div><div class="pt" style="top:20px">836.2 Go (Utilisé: 93%)</div></div>
<div class="pb" style="left:623px;width:41px;height:32px"><div class="bar" style="width:33px"><i style="width:27.5px;background:#3c96d2"></i></div><div class="pt" style="top:11px">(NTFS)</div><div class="pt" style="top:20px">560 Mo (Utilisé: 84%)</div></div>
<div class="pb" style="left:665px;width:40px;height:32px"><div class="bar" style="width:32px"><i style="width:27.5px;background:#3c96d2"></i></div><div class="pt" style="top:11px">(NTFS)</div><div class="pt" style="top:20px">523 Mo (Utilisé: 83%)</div></div>
<div class="pb" style="left:706px;width:58px;height:32px"><div class="bar" style="width:50px"><i style="width:17px;background:#26c6ea"></i></div><div class="pt" style="top:11px">(Ext4)</div><div class="pt" style="top:20px">86.2 Go (Utilisé: 33%)</div></div>
<div class="pb" style="left:765px;width:41px;height:32px"><div class="bar" style="width:33px"><i style="width:0px;background:#3c96d2"></i></div><div class="pt" style="top:11px">(Linux Swap)</div><div class="pt" style="top:20px">8.0 Go</div></div>
</div>
<div class="card" style="top:471px;height:35px">
<svg class="a" style="left:1px;top:15px" width="17" height="7" viewBox="0 0 17 7"><path d="M0.4,1.9 L8.7,0.3 L16.8,2.3 L7.7,4.7 Z" fill="#d9d9d9"/><path d="M0.4,1.9 L7.7,4.7 L7.7,6.7 L0.4,3.8 Z" fill="#2a2a2a"/><path d="M7.7,4.7 L16.8,2.3 L16.8,3.9 L7.7,6.7 Z" fill="#b0b0b0"/><path d="M5.6,4.6 L7.6,5.3 L7.6,6.3 L5.6,5.6Z" fill="#3bb54a"/></svg>
<div class="dl" style="top:3.5px;font-weight:bold;color:#111;font-size:6.9px">Disque 5</div>
<div class="dl" style="top:13px">MBR</div>
<div class="dl" style="top:22px">931.51 Go</div>
<div class="pb" style="left:57px;width:42px;height:32px"><div class="bar" style="width:34px"><i style="width:34px;background:#3c96d2"></i></div><div class="pt" style="top:11px">D:(BitLocker)</div><div class="pt" style="top:20px">50 Mo (Utilisé: 100%)</div></div>
<div class="pb" style="left:100px;width:664px;height:32px"><div class="bar" style="width:656px"><i style="width:479px;background:#3c96d2"></i></div><div class="pt" style="top:11px">G:(NTFS)</div><div class="pt" style="top:20px">930.9 Go (Utilisé: 73%)</div></div>
<div class="pb" style="left:765px;width:41px;height:32px"><div class="bar" style="width:33px"><i style="width:27px;background:#3c96d2"></i></div><div class="pt" style="top:11px">(NTFS)</div><div class="pt" style="top:20px">523 Mo (Utilisé: 84%)</div></div>
</div>
<div class="t" style="left:795px;top:499px;font-size:10.3px;line-height:12px;height:12px;color:rgba(120,120,120,0.45)">Activer Windows</div>
<div class="t" style="left:795px;top:512px;font-size:7.6px;color:rgba(120,120,120,0.45)">Accédez aux paramètres pour activer Windows.</div>
<div class="a" style="left:0;top:547px;width:1000px;height:16px;background:#1d1b1a"></div>
<svg class="a" style="left:5px;top:551px" width="10" height="9" viewBox="0 0 10 9"><path d="M0,1.3 L4,0.7 L4,4.2 L0,4.2Z M4.6,0.6 L9.5,0 L9.5,4.2 L4.6,4.2Z M0,4.8 L4,4.8 L4,8.3 L0,7.7Z M4.6,4.8 L9.5,4.8 L9.5,9 L4.6,8.4Z" fill="#fff"/></svg>
<div class="a" style="left:19px;top:547px;width:134px;height:16px;background:#f0f0f0;border-top:1px solid #cfcfcf"></div>
<svg class="a" style="left:25px;top:551px" width="10" height="10" viewBox="0 0 10 10"><circle cx="6" cy="3.8" r="2.8" fill="none" stroke="#333" stroke-width="0.9"/><path d="M4,5.8 L1,8.8" stroke="#333" stroke-width="1"/></svg>
<div class="t" style="left:40px;top:550.5px;font-size:7px;color:#333">Rechercher</div>
<svg class="a" style="left:122px;top:547px" width="30" height="16" viewBox="0 0 30 16">
<rect x="3.5" y="5.5" width="7" height="6" fill="#e6c49a"/>
<rect x="4.5" y="6.8" width="1.2" height="4" fill="#c04030"/><rect x="6.6" y="6.8" width="1.2" height="4" fill="#c04030"/><rect x="8.7" y="6.8" width="1.2" height="4" fill="#c04030"/>
<path d="M11.8,6 L11.8,11.5" stroke="#7a5a3a" stroke-width="0.8"/>
<circle cx="12" cy="4.2" r="3" fill="#a9b83a"/>
<rect x="15" y="2.5" width="13" height="10" fill="#e9b98a"/>
<rect x="15.5" y="1.8" width="12.5" height="1.6" fill="#dccbaa"/>
<rect x="16" y="5" width="2.8" height="6.5" fill="#d49464"/>
<rect x="19.6" y="4" width="1.4" height="7" fill="#c63a26"/><rect x="22" y="4" width="1.4" height="7" fill="#c63a26"/><rect x="24.4" y="4" width="1.4" height="7" fill="#fff"/><rect x="26.2" y="4" width="1.4" height="7" fill="#c63a26"/>
<rect x="9" y="11.5" width="19" height="4.5" fill="#dcb47c"/>
<ellipse cx="6" cy="16" rx="5" ry="4" fill="#5c9a32"/>
</svg>
<svg class="a" style="left:157px;top:551px" width="11" height="9" viewBox="0 0 11 9"><path d="M0.5,0.8h7M0.5,8.2h7" stroke="#ddd" stroke-width="1"/><rect x="1.5" y="2.5" width="5" height="4" fill="none" stroke="#ddd" stroke-width="0.9"/><path d="M9.5,1v1.5M9.5,4v3" stroke="#ddd" stroke-width="1"/></svg>
<div class="a" style="left:176px;top:552px;width:1px;height:7px;background:#555"></div>
<svg class="a" style="left:187.5px;top:550px" width="10" height="10" viewBox="0 0 10 10"><circle cx="5" cy="5" r="4.2" fill="#f66a27"/><circle cx="5.3" cy="5.4" r="2.3" fill="#7a3fd0"/><path d="M1.5,3 Q3,0 6.5,1.2 Q4.5,1.5 4,3" fill="#ffbd2e"/></svg>
<svg class="a" style="left:205px;top:550px" width="10" height="10" viewBox="0 0 10 10"><circle cx="5" cy="5" r="4.2" fill="#1e9be0"/><path d="M2.5,6 Q3,3 6,3.5 Q8.5,4 8.5,6.5 L5,6.5 Q5.5,8 8,7.8 Q6.5,9.5 4,9 Q1.5,8 2.5,6Z" fill="#54d46a"/><circle cx="5.5" cy="5.5" r="1.5" fill="#0c5fb0"/></svg>
<svg class="a" style="left:222.5px;top:550px" width="10" height="10" viewBox="0 0 10 10"><path d="M1,2 L4,2 L5,3 L9,3 L9,9 L1,9Z" fill="#f4c542"/><rect x="3" y="5" width="4" height="3" fill="#2d8ae0"/></svg>
<svg class="a" style="left:240px;top:550px" width="10" height="10" viewBox="0 0 10 10"><circle cx="5" cy="5" r="4.2" fill="#e34133"/><path d="M5,5 L9.2,5 A4.2,4.2 0 0 1 2.9,8.6Z" fill="#f8c12d"/><path d="M5,5 L2.9,8.6 A4.2,4.2 0 0 1 1.3,3Z" fill="#2fa84f"/><circle cx="5" cy="5" r="1.8" fill="#fff"/><circle cx="5" cy="5" r="1.3" fill="#3d7ae0"/></svg>
<svg class="a" style="left:258px;top:550px" width="10" height="10" viewBox="0 0 10 10"><path d="M1,6 Q3,2 9,3 L8,7 Q5,9 1,6Z" fill="#c8303a"/><path d="M3,5 L7,4 L6.5,6Z" fill="#fff"/><rect x="4" y="7" width="2" height="2" fill="#3a79c5"/></svg>
<svg class="a" style="left:275.5px;top:550px" width="10" height="10" viewBox="0 0 10 10"><ellipse cx="5" cy="5" rx="3.8" ry="4.2" fill="#e01025"/><ellipse cx="5" cy="5" rx="1.6" ry="3" fill="#1d1b1a"/></svg>
<svg class="a" style="left:293px;top:550px" width="10" height="10" viewBox="0 0 10 10"><circle cx="5" cy="5" r="4.2" fill="#a35cf0"/><path d="M2.5,6.5 L4,4 L5.5,5.5 L7.5,3.5 L6,6 L4.5,4.5Z" fill="#fff"/></svg>
<svg class="a" style="left:310.8px;top:550px" width="10" height="10" viewBox="0 0 10 10"><circle cx="5" cy="5" r="4.2" fill="#16a1e6"/><path d="M6.5,3.3 Q5,2.5 4,3.3 Q3.2,4.3 5,5 Q6.8,5.7 6,6.7 Q5,7.5 3.5,6.7" fill="none" stroke="#fff" stroke-width="1"/></svg>
<svg class="a" style="left:328px;top:550px" width="10" height="10" viewBox="0 0 10 10"><circle cx="5.2" cy="5.5" r="3.8" fill="#1f7ee0"/><path d="M2,3 Q4,0 7,2" fill="none" stroke="#6fb8ff" stroke-width="1"/></svg>
<svg class="a" style="left:345px;top:550px" width="10" height="10" viewBox="0 0 10 10"><rect x="1" y="3" width="8" height="6" rx="1" fill="#8a8fa8"/><circle cx="5" cy="6" r="1.8" fill="#d8dbe8"/><rect x="3.5" y="2" width="3" height="1.5" fill="#8a8fa8"/></svg>
<svg class="a" style="left:362.5px;top:550px" width="10" height="10" viewBox="0 0 10 10"><path d="M5,1 L9,2.5 Q9,7 5,9.5 Q1,7 1,2.5Z" fill="#e8c030"/><path d="M5,2.5 L7.5,3.5 Q7.5,6.5 5,8 Q2.5,6.5 2.5,3.5Z" fill="#3a7a2a"/></svg>
<svg class="a" style="left:379.5px;top:550px" width="10" height="10" viewBox="0 0 10 10"><circle cx="5" cy="5" r="4.2" fill="#8fc8f8"/><rect x="2.8" y="2.8" width="4.4" height="4.4" fill="#e8f4ff"/></svg>
<svg class="a" style="left:396.8px;top:550px" width="10" height="10" viewBox="0 0 10 10"><circle cx="5" cy="5" r="4.2" fill="#5b8db0"/><circle cx="5" cy="5" r="3" fill="#b9d3e3"/><circle cx="5" cy="5" r="1.6" fill="#4a7da8"/></svg>
<div class="a" style="left:411px;top:547px;width:17px;height:16px;background:#3d3a38"></div>
<div class="a" style="left:411px;top:561.5px;width:17px;height:1.5px;background:#e8d9b5"></div>
<svg class="a" style="left:413px;top:549px" width="12" height="12" viewBox="0 0 13 14">
<ellipse cx="3.8" cy="4.8" rx="2.2" ry="1.1" transform="rotate(-25 3.8 4.8)" fill="#9fd0f0"/>
<path d="M2.2,9.5 Q2.5,6.2 6,5.2 L9.5,1.8 Q12.6,3.5 12,8 Q11.5,12.5 6.5,12.8 Q2.8,12.8 2.2,9.5Z" fill="url(#lg)"/>
<path d="M9,3.5 L11,5.5 L9.5,7.5Z" fill="#6cc04a" opacity="0.8"/>
<path d="M2,13.5 L9,6.5" stroke="#555" stroke-width="0.6"/>
</svg>
<div class="a" style="left:436px;top:551px;width:1px;height:8px;background:#666"></div>
<div class="t" style="left:442.5px;top:550.5px;color:#e8e8e8;font-size:6.0px">Bureau</div>
<svg class="a" style="left:466px;top:550px" width="7" height="10" viewBox="0 0 7 10"><circle cx="3.5" cy="3" r="2.2" fill="#e9b896"/><path d="M0.5,10 Q0.5,5.5 3.5,5.5 Q6.5,5.5 6.5,10Z" fill="#6aa06a"/></svg>
<div class="t" style="left:474.5px;top:550.5px;color:#e8e8e8;font-size:6.3px">rémi cassan</div>
<svg class="a" style="left:548px;top:550px" width="10" height="10" viewBox="0 0 10 10"><rect x="0.5" y="1" width="9" height="6" fill="#3aa2ee"/><rect x="3" y="8" width="4" height="1.2" fill="#3aa2ee"/></svg>
<div class="t" style="left:559.5px;top:550.5px;color:#e8e8e8;font-size:5.7px">Ce PC</div>
<svg class="a" style="left:631px;top:549px" width="11" height="11" viewBox="0 0 11 11"><circle cx="6.5" cy="4" r="3.3" fill="#5ab0ee"/><path d="M4,4 Q6.5,2 9,4 M6.5,0.8 V7.2" stroke="#2a7ac0" stroke-width="0.5" fill="none"/><path d="M1,10 L4.5,6.5 L6,8 L9,5" stroke="#3a90dc" stroke-width="1.4" fill="none"/></svg>
<div class="t" style="left:642.5px;top:550.5px;color:#e8e8e8;font-size:5.8px">Réseau</div>
<svg class="a" style="left:716px;top:550px" width="9" height="10" viewBox="0 0 9 10"><rect x="0.5" y="1.5" width="8" height="7" fill="#3a8fd4"/><rect x="2" y="3" width="3" height="4" fill="#f4f4f4"/><rect x="5.5" y="4.5" width="2" height="2.5" fill="#e8c24a"/></svg>
<div class="t" style="left:726px;top:550.5px;color:#e8e8e8;font-size:6.2px">Panneau de configurati...</div>
<svg class="a" style="left:853px;top:550px" width="6" height="5" viewBox="0 0 6 5"><path d="M0.8,0.8 L2.5,2.2 L0.8,3.6 M3,0.8 L4.7,2.2 L3,3.6" fill="none" stroke="#ddd" stroke-width="0.8"/></svg>
<svg class="a" style="left:865px;top:549px" width="10" height="12" viewBox="0 0 10 12"><rect x="1.5" y="0.5" width="2.5" height="8" rx="1.2" fill="#8ab4f0"/><circle cx="2.7" cy="9.2" r="2.3" fill="#6fa0e8"/><rect x="2" y="3" width="1.4" height="6" fill="#e04a7a"/><path d="M6,1.5h3M7.5,1.5v9" stroke="#e83838" stroke-width="1.3"/></svg>
<svg class="a" style="left:886px;top:552px" width="8" height="6" viewBox="0 0 8 6"><path d="M0.8,4.8 L4,1.5 L7.2,4.8" fill="none" stroke="#ddd" stroke-width="0.9"/></svg>
<svg class="a" style="left:899px;top:550px" width="7" height="10" viewBox="0 0 7 10"><rect x="1" y="0.5" width="5" height="2" fill="none" stroke="#ccc" stroke-width="0.8"/><rect x="0.5" y="3.5" width="6" height="4" rx="1" fill="none" stroke="#ccc" stroke-width="0.8"/><path d="M2,9.2h3" stroke="#ccc" stroke-width="0.8"/></svg>
<svg class="a" style="left:910px;top:550px" width="9" height="10" viewBox="0 0 9 10"><rect x="2" y="1" width="6.5" height="5.5" fill="none" stroke="#ccc" stroke-width="0.8"/><path d="M0.5,2v5h3M4,7.5v2M2.5,9.5h3" stroke="#ccc" stroke-width="0.8" fill="none"/></svg>
<svg class="a" style="left:922px;top:550px" width="9" height="10" viewBox="0 0 9 10"><path d="M0.5,3.5h2l2.5,-2.5v8l-2.5,-2.5h-2Z" fill="none" stroke="#ccc" stroke-width="0.8"/><path d="M6.5,3 Q7.5,5 6.5,7M8,2 Q9.2,5 8,8" fill="none" stroke="#ccc" stroke-width="0.7"/></svg>
<div class="t" style="left:937px;top:550.5px;color:#ddd;font-size:5.8px">FRA</div>
<div class="t" style="left:955px;top:550.5px;color:#ddd;font-size:5.8px">13:55</div>
<svg class="a" style="left:978px;top:550px" width="10" height="10" viewBox="0 0 10 10"><path d="M0.5,0.8h9v6.5h-4l-1.5,1.8l-1,-1.8h-2.5Z" fill="none" stroke="#ddd" stroke-width="0.9"/></svg>
<div class="a" style="left:186px;top:561.5px;width:13px;height:1.5px;background:#e6dcc4"></div>
<div class="a" style="left:437px;top:0;width:25px;height:1px;background:#a08a66"></div>
<div class="a" style="left:462px;top:0;width:100px;height:1px;background:#c8d2dc"></div>
</body></html>
